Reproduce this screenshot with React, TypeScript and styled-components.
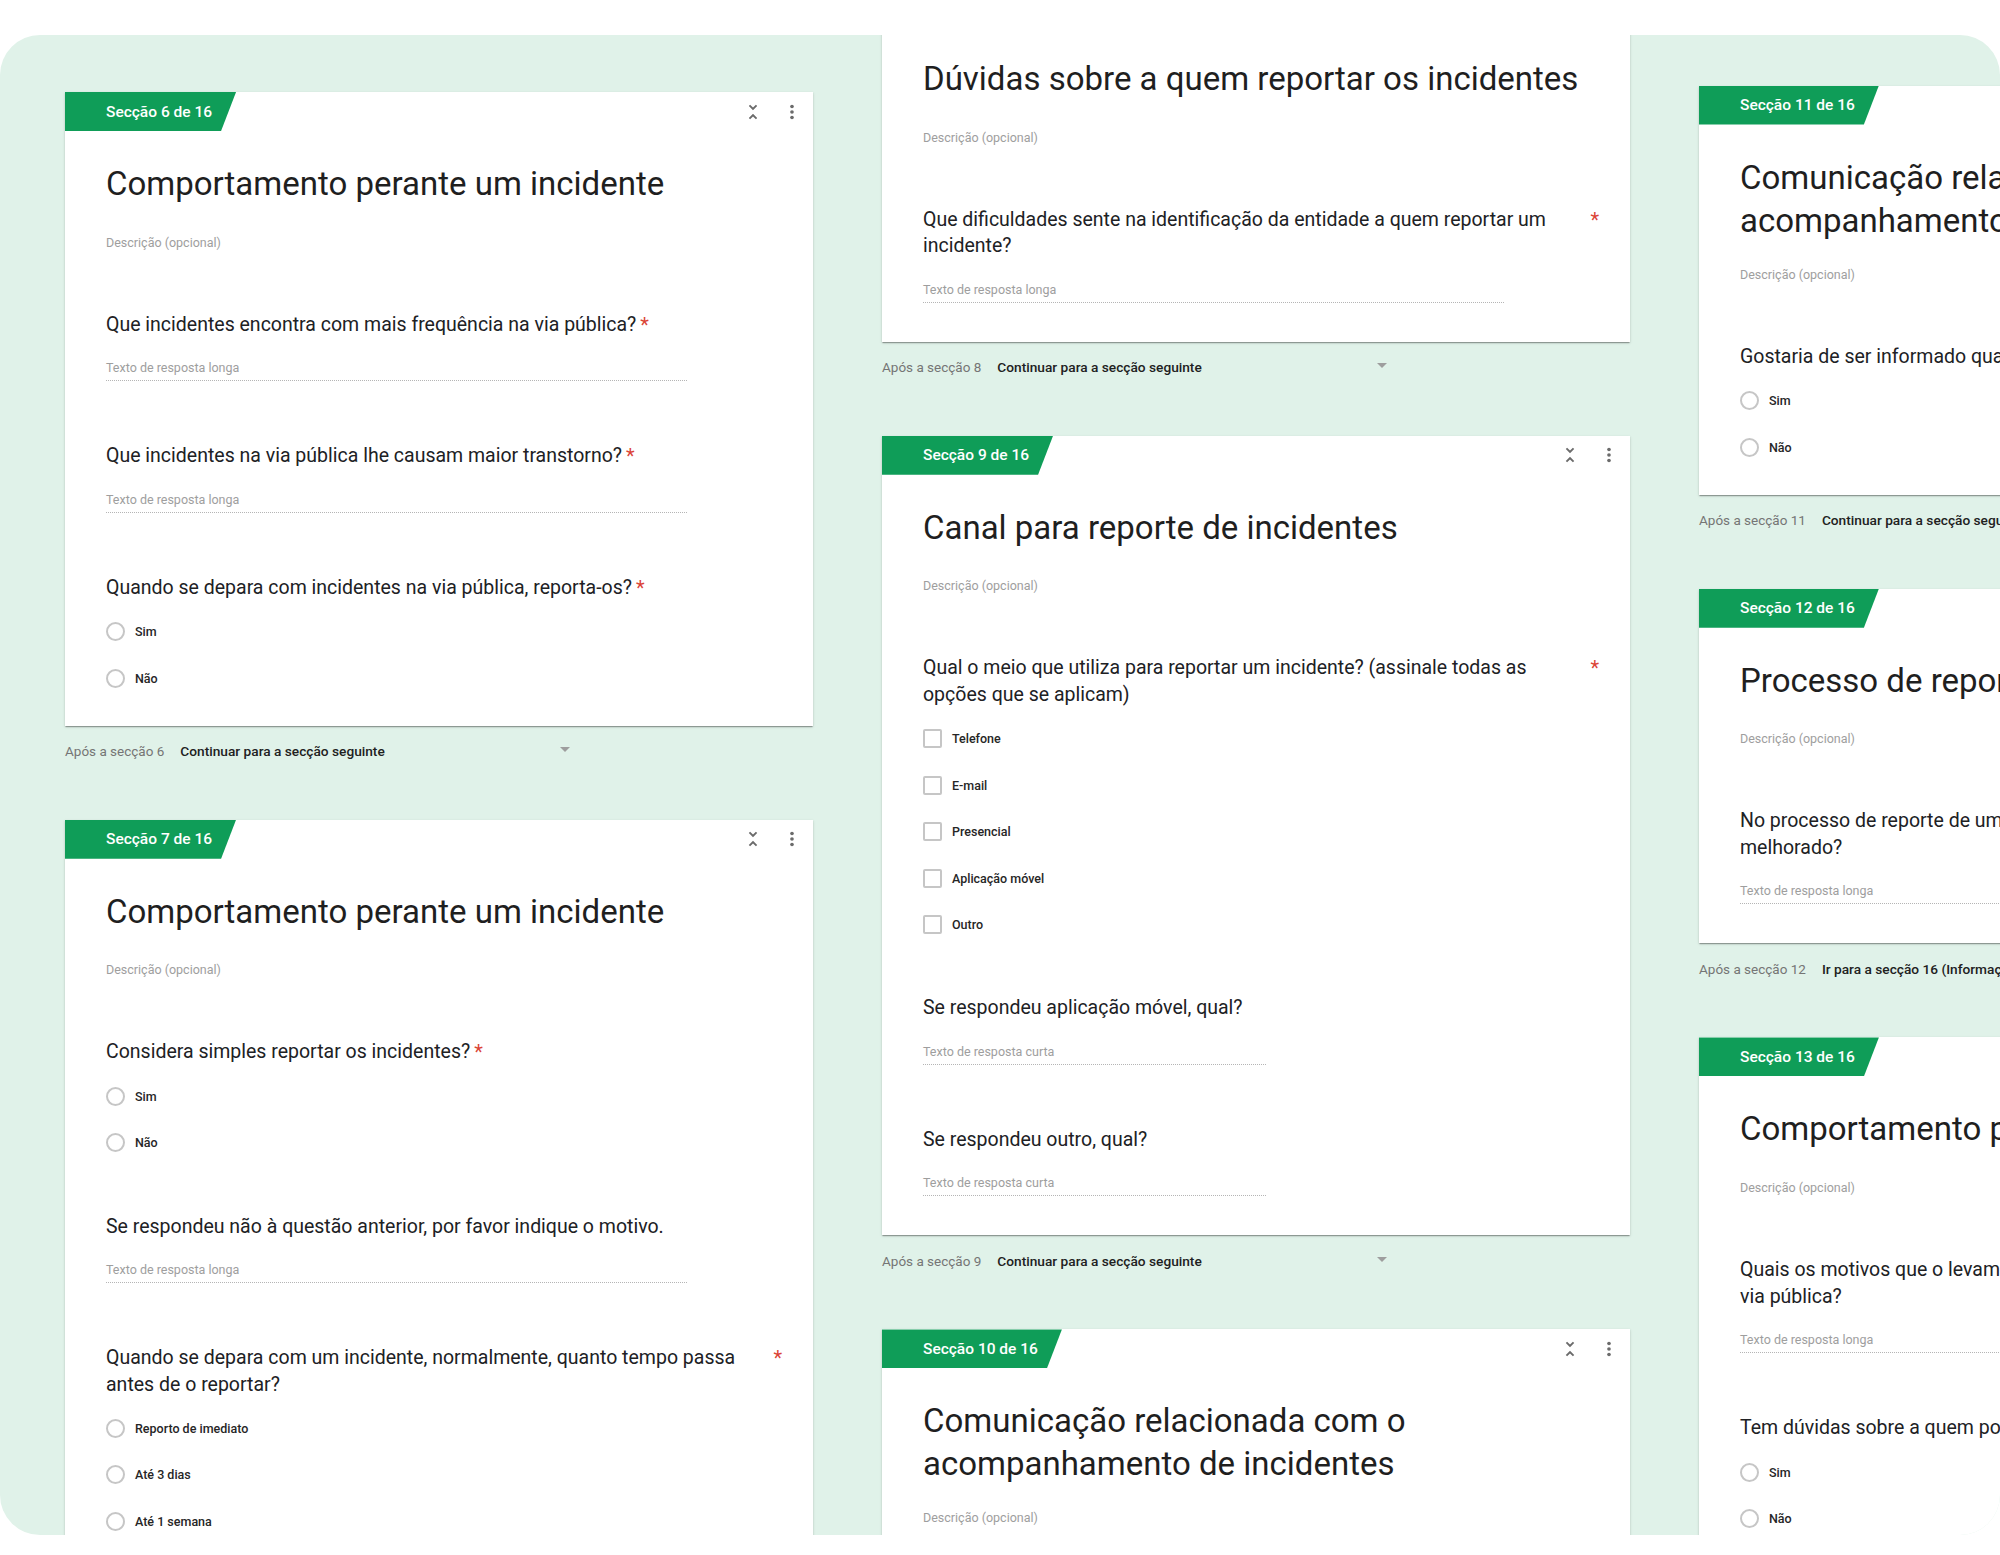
import React from "react";
import styled, { createGlobalStyle } from "styled-components";

const GlobalStyle = createGlobalStyle`
  html, body { margin: 0; padding: 0; background: #ffffff; }
  body {
    font-family: Roboto, "Liberation Sans", Arial, sans-serif;
    -webkit-font-smoothing: antialiased;
  }
  *, *::before, *::after { box-sizing: border-box; }
`;

type Item =
  | { kind: "long" | "short"; q: string; required?: boolean }
  | { kind: "radio" | "check"; q: string; required?: boolean; options: string[] };

type Section = {
  n: number;
  title: string;
  items: Item[];
  after?: { label: string; action: string };
};

const columns: { offset: number; sections: Section[] }[] = [
  {
    offset: 57,
    sections: [
      {
        n: 6,
        title: "Comportamento perante um incidente",
        items: [
          { kind: "long", q: "Que incidentes encontra com mais frequência na via pública?", required: true },
          { kind: "long", q: "Que incidentes na via pública lhe causam maior transtorno?", required: true },
          { kind: "radio", q: "Quando se depara com incidentes na via pública, reporta-os?", required: true, options: ["Sim", "Não"] },
        ],
        after: { label: "Após a secção 6", action: "Continuar para a secção seguinte" },
      },
      {
        n: 7,
        title: "Comportamento perante um incidente",
        items: [
          { kind: "radio", q: "Considera simples reportar os incidentes?", required: true, options: ["Sim", "Não"] },
          { kind: "long", q: "Se respondeu não à questão anterior, por favor indique o motivo." },
          {
            kind: "radio",
            q: "Quando se depara com um incidente, normalmente, quanto tempo passa antes de o reportar?",
            required: true,
            options: ["Reporto de imediato", "Até 3 dias", "Até 1 semana", "Mais de 1 semana"],
          },
        ],
      },
    ],
  },
  {
    offset: -48,
    sections: [
      {
        n: 8,
        title: "Dúvidas sobre a quem reportar os incidentes",
        items: [
          { kind: "long", q: "Que dificuldades sente na identificação da entidade a quem reportar um incidente?", required: true },
        ],
        after: { label: "Após a secção 8", action: "Continuar para a secção seguinte" },
      },
      {
        n: 9,
        title: "Canal para reporte de incidentes",
        items: [
          {
            kind: "check",
            q: "Qual o meio que utiliza para reportar um incidente? (assinale todas as opções que se aplicam)",
            required: true,
            options: ["Telefone", "E-mail", "Presencial", "Aplicação móvel", "Outro"],
          },
          { kind: "short", q: "Se respondeu aplicação móvel, qual?" },
          { kind: "short", q: "Se respondeu outro, qual?" },
        ],
        after: { label: "Após a secção 9", action: "Continuar para a secção seguinte" },
      },
      {
        n: 10,
        title: "Comunicação relacionada com o acompanhamento de incidentes",
        items: [
          { kind: "radio", q: "Gostaria de ser informado quando o incidente fosse resolvido?", required: true, options: ["Sim", "Não"] },
        ],
      },
    ],
  },
  {
    offset: 50.5,
    sections: [
      {
        n: 11,
        title: "Comunicação relacionada com o acompanhamento de incidentes",
        items: [
          { kind: "radio", q: "Gostaria de ser informado quando o incidente fosse resolvido?", required: true, options: ["Sim", "Não"] },
        ],
        after: { label: "Após a secção 11", action: "Continuar para a secção seguinte" },
      },
      {
        n: 12,
        title: "Processo de reporte de incidentes",
        items: [
          { kind: "long", q: "No processo de reporte de um incidente, o que acha que poderia ser melhorado?", required: true },
        ],
        after: { label: "Após a secção 12", action: "Ir para a secção 16 (Informações finais)" },
      },
      {
        n: 13,
        title: "Comportamento perante um incidente",
        items: [
          { kind: "long", q: "Quais os motivos que o levam a não reportar incidentes na\nvia pública?", required: true },
          { kind: "radio", q: "Tem dúvidas sobre a quem pode reportar um incidente?", required: true, options: ["Sim", "Não"] },
        ],
      },
    ],
  },
];

/* ---------- layout ---------- */

const Page = styled.div`
  width: 2000px;
  height: 1555px;
  padding: 35px 0 20px;
  background: #ffffff;
  overflow: hidden;
`;

const Board = styled.main`
  height: 1500px;
  background: #e0f2e9;
  border-radius: 40px;
  overflow: hidden;
  display: grid;
  grid-template-columns: repeat(3, 748px);
  column-gap: 69px;
  padding-left: 65px;
  align-items: start;
`;

const Column = styled.div<{ $offset: number }>`
  display: flex;
  flex-direction: column;
  margin-top: ${(p) => p.$offset}px;
`;

/* ---------- card ---------- */

const Card = styled.section`
  background: #ffffff;
  box-shadow: 0 2px 1px -1px rgba(0, 0, 0, 0.2), 0 1px 1px 0 rgba(0, 0, 0, 0.14),
    0 1px 3px 0 rgba(0, 0, 0, 0.12);
`;

const CardHeader = styled.header`
  height: 39px;
  display: flex;
  align-items: center;
  justify-content: space-between;
`;

const SectionTab = styled.div`
  height: 39px;
  display: flex;
  align-items: center;
  padding: 0 24px 0 41px;
  background: #0f9d58;
  color: #ffffff;
  font-size: 15.5px;
  font-weight: 500;
  white-space: nowrap;
  clip-path: polygon(0 0, 100% 0, calc(100% - 15px) 100%, 0 100%);
`;

const Tools = styled.div`
  display: flex;
  align-items: center;
  gap: 17px;
  padding-right: 10px;
  color: #6b6b6b;

  svg {
    display: block;
  }
`;

const CardBody = styled.div`
  padding: 31px 31px 23px 41px;
`;

const Title = styled.h2`
  margin: 0;
  min-height: 47.5px;
  font-size: 33px;
  line-height: 43px;
  font-weight: 400;
  color: #1f1f1f;
`;

const Description = styled.div`
  margin-top: 24px;
  font-size: 12.5px;
  line-height: 18px;
  color: #9e9e9e;
`;

const Questions = styled.div`
  display: flex;
  flex-direction: column;
  gap: 46px;
  margin-top: 60.2px;
`;

const QuestionBlock = styled.div`
  display: flex;
  flex-direction: column;
`;

const QuestionRow = styled.div`
  display: flex;
  align-items: flex-start;
`;

const QuestionText = styled.div`
  flex: 0 1 auto;
  min-width: 0;
  font-size: 19.5px;
  line-height: 26.5px;
  color: #202124;
  white-space: pre-line;
`;

const Asterisk = styled.span`
  flex: none;
  margin-left: 4px;
  font-size: 20px;
  line-height: 26.5px;
  color: #db4437;
`;

const AnswerField = styled.div<{ $width: number }>`
  width: ${(p) => p.$width}px;
  margin-top: 21px;
  margin-bottom: 16px;
  padding-bottom: 3px;
  font-size: 12.5px;
  line-height: 18px;
  color: #9e9e9e;
  border-bottom: 1px dotted #b5b5b5;
`;

const Options = styled.div`
  display: flex;
  flex-direction: column;
  margin: 7.2px 0 1.4px;
`;

const OptionRow = styled.div`
  height: 46.5px;
  display: flex;
  align-items: center;
  gap: 10px;
`;

const Radio = styled.span`
  flex: none;
  width: 19px;
  height: 19px;
  border: 2px solid #c6c6c6;
  border-radius: 50%;
`;

const Checkbox = styled.span`
  flex: none;
  width: 19px;
  height: 19px;
  border: 2px solid #c6c6c6;
  border-radius: 2px;
`;

const OptionLabel = styled.span`
  font-size: 12.5px;
  font-weight: 500;
  color: #262626;
`;

/* ---------- after-section navigation ---------- */

const AfterRow = styled.div`
  height: 18px;
  margin: 16.5px 0 59.5px;
  display: flex;
  align-items: center;
  white-space: nowrap;
`;

const AfterLabel = styled.span`
  font-size: 13.5px;
  color: #757575;
`;

const AfterSelect = styled.div`
  width: 390px;
  margin-left: 16px;
  display: flex;
  align-items: center;
  justify-content: space-between;
  font-size: 13.7px;
  font-weight: 500;
  color: #212121;
`;

const Caret = styled.span`
  flex: none;
  width: 0;
  height: 0;
  margin-top: -3px;
  border-left: 5px solid transparent;
  border-right: 5px solid transparent;
  border-top: 5px solid #9e9e9e;
`;

/* ---------- icons ---------- */

const CollapseIcon = () => (
  <svg width="22" height="22" viewBox="0 0 24 24" fill="currentColor" aria-hidden="true">
    <path d="M7.41 18.59L8.83 20 12 16.83 15.17 20l1.41-1.41L12 14l-4.59 4.59zm9.18-13.18L15.17 4 12 7.17 8.83 4 7.41 5.41 12 10l4.59-4.59z" />
  </svg>
);

const MoreIcon = () => (
  <svg width="22" height="22" viewBox="0 0 24 24" fill="currentColor" aria-hidden="true">
    <circle cx="12" cy="6" r="2" />
    <circle cx="12" cy="12" r="2" />
    <circle cx="12" cy="18" r="2" />
  </svg>
);

/* ---------- components ---------- */

const QuestionView = ({ item }: { item: Item }) => (
  <QuestionBlock>
    <QuestionRow>
      <QuestionText>{item.q}</QuestionText>
      {item.required && <Asterisk>*</Asterisk>}
    </QuestionRow>
    {item.kind === "long" && <AnswerField $width={581}>Texto de resposta longa</AnswerField>}
    {item.kind === "short" && <AnswerField $width={343}>Texto de resposta curta</AnswerField>}
    {(item.kind === "radio" || item.kind === "check") && (
      <Options>
        {item.options.map((o) => (
          <OptionRow key={o}>
            {item.kind === "radio" ? <Radio /> : <Checkbox />}
            <OptionLabel>{o}</OptionLabel>
          </OptionRow>
        ))}
      </Options>
    )}
  </QuestionBlock>
);

const SectionView = ({ section }: { section: Section }) => (
  <>
    <Card>
      <CardHeader>
        <SectionTab>Secção {section.n} de 16</SectionTab>
        <Tools>
          <CollapseIcon />
          <MoreIcon />
        </Tools>
      </CardHeader>
      <CardBody>
        <Title>{section.title}</Title>
        <Description>Descrição (opcional)</Description>
        <Questions>
          {section.items.map((it) => (
            <QuestionView key={it.q} item={it} />
          ))}
        </Questions>
      </CardBody>
    </Card>
    {section.after && (
      <AfterRow>
        <AfterLabel>{section.after.label}</AfterLabel>
        <AfterSelect>
          <span>{section.after.action}</span>
          <Caret />
        </AfterSelect>
      </AfterRow>
    )}
  </>
);

export default function App() {
  return (
    <>
      <GlobalStyle />
      <Page>
        <Board>
          {columns.map((col, i) => (
            <Column key={i} $offset={col.offset}>
              {col.sections.map((s) => (
                <SectionView key={s.n} section={s} />
              ))}
            </Column>
          ))}
        </Board>
      </Page>
    </>
  );
}
